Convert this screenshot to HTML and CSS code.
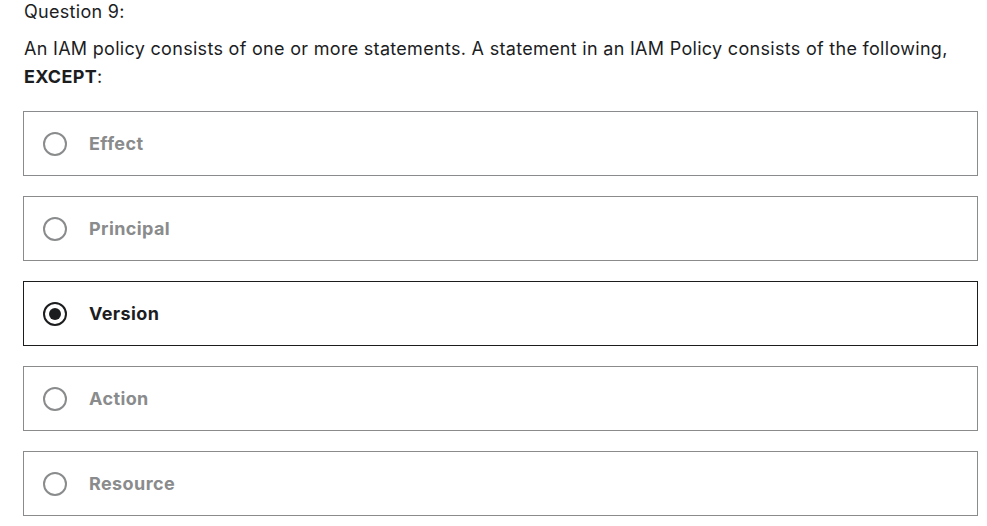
FILE: index.html
```html
<!DOCTYPE html>
<html>
<head>
<meta charset="utf-8">
<link rel="stylesheet" href="styles.css">
</head>
<body>
<div class="quiz">
  <div class="q-title">Question 9:</div>
  <div class="q-text">An IAM policy consists of one or more statements. A statement in an IAM Policy consists of the following, <strong>EXCEPT</strong>:</div>
  <div class="answers">
    <label class="answer"><span class="radio"></span><span class="label">Effect</span></label>
    <label class="answer"><span class="radio"></span><span class="label">Principal</span></label>
    <label class="answer selected"><span class="radio"></span><span class="label">Version</span></label>
    <label class="answer"><span class="radio"></span><span class="label">Action</span></label>
    <label class="answer"><span class="radio"></span><span class="label">Resource</span></label>
  </div>
</div>
</body>
</html>
```
FILE: styles.css
```css
html, body {
  margin: 0;
  padding: 0;
  background: #ffffff;
}
body {
  font-family: Inter, "Noto Sans", sans-serif;
  color: #1c1d1f;
}
.quiz {
  padding: 0 9px 0 24px;
}
.q-title {
  font-size: 18px;
  letter-spacing: 0.3px;
  line-height: 24px;
}
.q-text {
  font-size: 18px;
  letter-spacing: 0.3px;
  line-height: 28px;
  margin-top: 11px;
  padding-right: 20px;
}
.q-text strong {
  font-weight: 700;
}
.answers {
  display: flex;
  flex-direction: column;
  gap: 20px;
  margin-top: 20px;
  margin-left: -1px;
}
.answer {
  display: flex;
  align-items: center;
  height: 65px;
  box-sizing: border-box;
  border: 1px solid #8a8b8c;
  padding-left: 19px;
}
.radio {
  width: 24px;
  height: 24px;
  box-sizing: border-box;
  border: 2px solid #8a8b8c;
  border-radius: 50%;
  flex: none;
  display: flex;
  align-items: center;
  justify-content: center;
}
.label {
  margin-left: 22px;
  font-size: 18px;
  letter-spacing: 0.4px;
  font-weight: 700;
  color: #8a8b8c;
}
.answer.selected {
  border-color: #1c1d1f;
}
.answer.selected .radio {
  border-color: #1c1d1f;
}
.answer.selected .radio::after {
  content: "";
  width: 12px;
  height: 12px;
  border-radius: 50%;
  background: #1c1d1f;
}
.answer.selected .label {
  color: #1c1d1f;
}
```
